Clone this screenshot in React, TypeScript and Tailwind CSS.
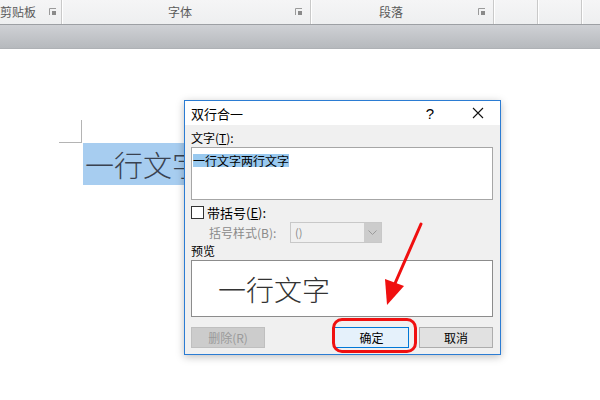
import React from "react";

const CJK = { fontFamily: '"Noto Sans CJK SC", "Microsoft YaHei", sans-serif' };

function Launcher() {
  return (
    <svg width="8" height="8" viewBox="0 0 8 8" className="shrink-0">
      <path d="M0.5 7V0.5H7" stroke="#9a9a9a" strokeWidth="1" fill="none" />
      <rect x="3" y="3" width="4" height="4" fill="#8a8a8a" />
    </svg>
  );
}

function Sep() {
  return (
    <div className="flex h-full shrink-0">
      <div className="w-px bg-[#c9c9c9]" />
      <div className="w-px bg-white" />
    </div>
  );
}

export default function App() {
  return (
    <div className="relative w-[600px] h-[400px] overflow-hidden bg-white" style={CJK}>
      {/* ribbon */}
      <div className="flex h-[24px] bg-gradient-to-b from-[#f5f5f6] to-[#eeeff0] text-[12px] text-[#5a5a5a]">
        <div className="flex items-center w-[61px]">
          <span className="leading-none">剪贴板</span>
          <div className="ml-auto mr-[4px]"><Launcher /></div>
        </div>
        <Sep />
        <div className="flex items-center w-[247px]">
          <span className="flex-1 text-center pl-[2px] leading-none">字体</span>
          <div className="mr-[7px]"><Launcher /></div>
        </div>
        <Sep />
        <div className="flex items-center w-[181px]">
          <span className="flex-1 text-center pr-[8px] leading-none">段落</span>
          <div className="mr-[7px]"><Launcher /></div>
        </div>
        <Sep />
        <div className="w-[42px]" />
        <Sep />
        <div className="w-[42px]" />
        <Sep />
        <div className="flex-1" />
      </div>
      <div className="h-px bg-[#9da0a4]" />
      <div className="h-[24px] bg-gradient-to-b from-[#cfd1d5] to-[#b6b9bd] border-b border-[#aeb1b5]" />

      {/* document */}
      <div className="relative pl-[59px] pt-[71px]">
        <div className="flex">
          <div className="w-[23px] h-[23px] border-r border-b border-[#b4b4b4]" />
        </div>
        <div className="ml-[24px] w-[130px] h-[42px] bg-[#a7cdf0] flex items-center text-[29px] text-[#3a4250] font-light leading-none pl-[2px]">
          一行文字
        </div>
      </div>

      {/* dialog */}
      <div className="absolute left-[184px] top-[100px] w-[317px] h-[255px] border border-[#2b7cd3] bg-[#f0f0f0] shadow-[0_2px_8px_rgba(0,0,0,0.25)] flex flex-col">
        <div className="h-[24px] bg-white flex items-center shrink-0">
          <span className="pl-[6px] text-[13px] text-black leading-none">双行合一</span>
          <span className="ml-auto text-[15px] text-black leading-none mr-[38px]" style={{ fontFamily: '"Liberation Sans", sans-serif' }}>?</span>
          <svg width="12" height="12" viewBox="0 0 12 12" className="mr-[16px]">
            <path d="M1 1L11 11M11 1L1 11" stroke="#111" strokeWidth="1.1" />
          </svg>
        </div>
        <div className="flex flex-col px-[6px] text-[12px] text-black">
          <div className="h-[22px] flex items-center pt-[3px] leading-none">文字(<span className="underline">T</span>):</div>
          <div className="h-[53px] mr-[1px] bg-white border border-[#a6a6a6] px-[1px] pt-[4px]">
            <span className="bg-[#99c9ef] text-[12px] leading-[13px] inline-block">一行文字两行文字</span>
          </div>
          <div className="flex items-center h-[14px] mt-[5px]">
            <div className="w-[13px] h-[13px] border border-[#333] bg-white" />
            <span className="ml-[3px] text-[13px] leading-none">带括号(<span className="underline">E</span>):</span>
          </div>
          <div className="flex items-center h-[21px] mt-[3px]">
            <span className="ml-[18px] w-[81px] text-[#8a8a8a] text-[12px] leading-none">括号样式(B):</span>
            <div className="flex w-[92px] h-[21px] border border-[#c8c8c8] bg-[#f0f0f0]">
              <span className="flex-1 pl-[4px] text-[#8a8a8a] text-[11px] leading-[19px]">()</span>
              <div className="w-[17px] h-full bg-[#cccccc] flex items-center justify-center">
                <svg width="9" height="6" viewBox="0 0 9 6">
                  <path d="M0.5 0.5L4.5 4.5L8.5 0.5" stroke="#9a9a9a" strokeWidth="1" fill="none" />
                </svg>
              </div>
            </div>
          </div>
          <div className="h-[14px] flex items-end leading-none">预览</div>
          <div className="mt-[3px] h-[57px] mr-[1px] bg-white border border-[#8c8c8c] flex items-center pl-[26px]">
            <span className="text-[28px] leading-none text-[#333] font-light">一行文字</span>
          </div>
          <div className="flex mt-[10px] h-[21px] mr-[1px]">
            <div className="w-[74px] h-[21px] bg-[#cccccc] border border-[#bfbfbf] flex items-center justify-center text-[#9a9a9a] text-[12px] leading-none">删除(R)</div>
            <div className="ml-auto w-[75px] h-[21px] bg-[#e5f1fb] border border-[#0078d7] flex items-center justify-center text-[12px] leading-none">确定</div>
            <div className="ml-[10px] w-[74px] h-[21px] bg-[#e1e1e1] border border-[#adadad] flex items-center justify-center text-[12px] leading-none">取消</div>
          </div>
        </div>
      </div>

      {/* red highlight */}
      <div className="absolute left-[332px] top-[318px] w-[85px] h-[35px] border-[3px] border-[#f01010] rounded-[10px]" />
      <svg className="absolute left-0 top-0" width="600" height="400" viewBox="0 0 600 400">
        <line x1="421" y1="224" x2="393" y2="288" stroke="#f01010" strokeWidth="3" strokeLinecap="round" />
        <polygon points="387,305 385,279 404,286" fill="#f01010" />
      </svg>
    </div>
  );
}
